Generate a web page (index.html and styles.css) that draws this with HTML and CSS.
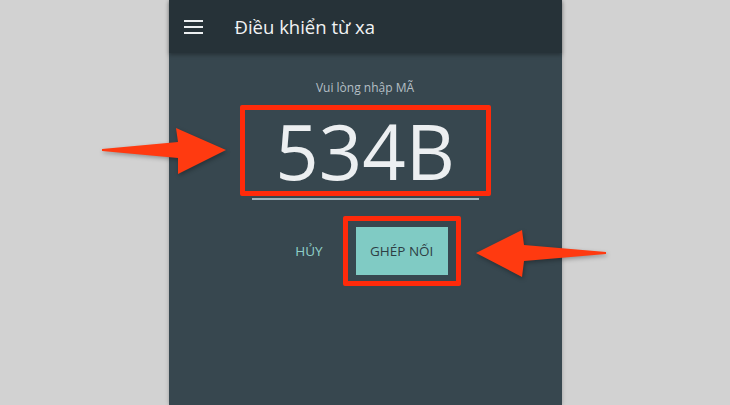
FILE: index.html
```html
<!DOCTYPE html>
<html lang="vi">
<head>
    <meta charset="UTF-8">
    <title>Điều khiển từ xa</title>
    <link rel="stylesheet" href="styles.css">
</head>
<body>
    <div class="stage">
        <div class="phone">
            <div class="appbar">
                <svg class="menu-icon" width="20" height="16" viewBox="0 0 20 16">
                    <rect x="0" y="1" width="19" height="2" fill="#eceff1"/>
                    <rect x="0" y="7" width="19" height="2" fill="#eceff1"/>
                    <rect x="0" y="13" width="19" height="2" fill="#eceff1"/>
                </svg>
                <span class="title">Điều khiển từ xa</span>
            </div>
            <div class="content">
                <div class="hint">Vui lòng nhập MÃ</div>
                <div class="code-mark">
                    <div class="code">534B</div>
                </div>
                <div class="underline"></div>
                <div class="actions">
                    <span class="cancel">HỦY</span>
                    <div class="pair-mark">
                        <button class="pair">GHÉP NỐI</button>
                    </div>
                </div>
            </div>
        </div>

        <!-- annotation arrows -->
        <svg class="arrow arrow-left" width="130" height="52" viewBox="0 0 130 52">
            <path d="M2 23 L78 16 L76 2 L126 24 L78 48 L78 32 L2 25 Z" fill="#ff3a10"/>
        </svg>
        <svg class="arrow arrow-right" width="136" height="52" viewBox="0 0 136 52">
            <path d="M132 24 L50 17 L48 2 L2 25 L48 49 L50 33 L132 26 Z" fill="#ff3a10"/>
        </svg>
    </div>
</body>
</html>
```
FILE: styles.css
```css
body {
    margin: 0;
    background-color: #d2d2d2;
    font-family: "Open Sans", "Noto Sans", sans-serif;
}
.stage {
    position: relative;
    width: 730px;
    height: 405px;
    overflow: hidden;
}
.phone {
    width: 393px;
    height: 405px;
    margin: 0 auto;
    background-color: #37474f;
    box-shadow: 0 0 4px rgba(0, 0, 0, 0.25);
}
.appbar {
    height: 53px;
    background-color: #263238;
    display: flex;
    align-items: center;
    padding-left: 15px;
    box-shadow: 0 2px 4px rgba(0, 0, 0, 0.3);
}
.menu-icon {
    margin-right: 31px;
}
.title {
    color: #f1f3f4;
    font-size: 18.5px;
}
.content {
    display: flex;
    flex-direction: column;
    align-items: center;
    padding-top: 26px;
}
.hint {
    color: #b4bfc5;
    font-size: 12px;
    height: 18px;
    line-height: 18px;
}
.code-mark {
    margin-top: 8px;
    width: 241px;
    height: 81px;
    border: 5px solid #ff2a0a;
    border-radius: 2px;
    display: flex;
    align-items: center;
    justify-content: center;
}
.code {
    color: #eceff1;
    font-size: 76px;
    line-height: 81px;
}
.underline {
    width: 227px;
    height: 2px;
    margin-top: 2px;
    background-color: #9fb3bb;
}
.actions {
    display: flex;
    align-items: center;
    margin-top: 16px;
    margin-left: 26px;
}
.cancel {
    color: #8fd0c9;
    font-size: 13.5px;
    margin-right: 20px;
}
.pair-mark {
    border: 5px solid #ff2a0a;
    border-radius: 2px;
    padding: 6px 8px;
}
.pair {
    display: block;
    width: 92px;
    height: 48px;
    border: none;
    background-color: #80cbc4;
    color: #2e3e45;
    font-family: "Open Sans", "Noto Sans", sans-serif;
    font-size: 13.5px;
    padding: 0;
}
.arrow {
    position: absolute;
    filter: drop-shadow(1px 2px 2px rgba(0, 0, 0, 0.3));
}
.arrow-left {
    left: 100px;
    top: 126px;
}
.arrow-right {
    left: 474px;
    top: 228px;
}
```
